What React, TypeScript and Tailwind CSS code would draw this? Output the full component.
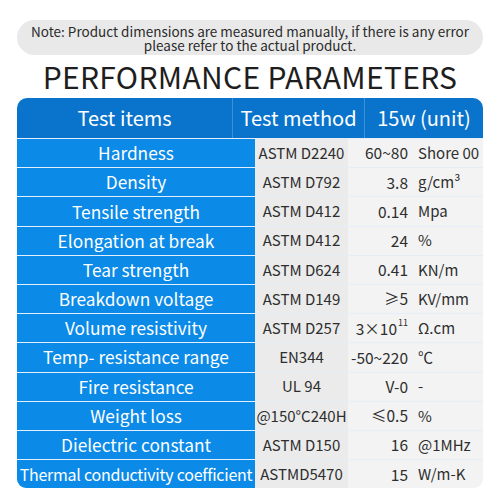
import React from 'react';

interface Param {
  item: string;
  method: string;
  value: React.ReactNode;
  unit: React.ReactNode;
}

const params: Param[] = [
  { item: 'Hardness', method: 'ASTM D2240', value: '60~80', unit: 'Shore 00' },
  { item: 'Density', method: 'ASTM D792', value: '3.8', unit: 'g/cm³' },
  { item: 'Tensile strength', method: 'ASTM D412', value: '0.14', unit: 'Mpa' },
  { item: 'Elongation at break', method: 'ASTM D412', value: '24', unit: '%' },
  { item: 'Tear strength', method: 'ASTM D624', value: '0.41', unit: 'KN/m' },
  { item: 'Breakdown voltage', method: 'ASTM D149', value: '≥5', unit: 'KV/mm' },
  {
    item: 'Volume resistivity',
    method: 'ASTM D257',
    value: (
      <span className="flex items-start">
        3×10<span className="text-[9px] leading-[9px] ml-[1px] mt-[1px]">11</span>
      </span>
    ),
    unit: 'Ω.cm',
  },
  { item: 'Temp- resistance range', method: 'EN344', value: '-50~220', unit: '℃' },
  { item: 'Fire resistance', method: 'UL 94', value: 'V-0', unit: '-' },
  { item: 'Weight loss', method: '@150°C240H', value: '≤0.5', unit: '%' },
  { item: 'Dielectric constant', method: 'ASTM D150', value: '16', unit: '@1MHz' },
  { item: 'Thermal conductivity coefficient', method: 'ASTMD5470', value: '15', unit: 'W/m-K' },
];

const font = { fontFamily: '"Noto Sans CJK SC", "Noto Sans", sans-serif' };

export default function App() {
  return (
    <div className="w-[500px] h-[500px] bg-white pt-[20px]" style={font}>
      {/* 提示 */}
      <div className="mx-[17px] h-[35px] rounded-full bg-[#e9e9e9] flex flex-col items-center justify-center text-[13.5px] leading-[14px] text-[#2b2b2b]">
        <span className="block h-[14px]">Note: Product dimensions are measured manually, if there is any error</span>
        <span className="block h-[14px]">please refer to the actual product.</span>
      </div>

      <h1 className="h-[43px] flex items-center justify-center text-[30px] text-[#1e1e1e] tracking-[0.3px]">
        PERFORMANCE PARAMETERS
      </h1>

      <div className="mx-[17px] rounded-t-[10px] rounded-b-[9px] overflow-hidden bg-white">
        {/* 表头 */}
        <div className="grid grid-cols-[216px_132px_118px] h-[40px] bg-[#0a74cc] text-white text-[20px]">
          <div className="flex items-center justify-center border-r border-[#3d8fd6]">Test items</div>
          <div className="flex items-center justify-center border-r border-[#3d8fd6]">Test method</div>
          <div className="flex items-center justify-center">15w (unit)</div>
        </div>

        {params.map((p, i) => (
          <div
            key={p.item}
            className="grid grid-cols-[238px_93px_64px_71px] h-[29.2px] border-t-[1.5px] border-[#e3eef8]"
          >
            <div
              className={
                i === params.length - 1
                  ? 'bg-[#0b8ae8] text-white text-[16px] flex items-center justify-center whitespace-nowrap tracking-[-0.25px]'
                  : 'bg-[#0b8ae8] text-white text-[17.3px] flex items-center justify-center whitespace-nowrap'
              }
            >
              {p.item}
            </div>
            <div className="bg-[#ebebeb] text-[#2e2e2e] text-[15px] flex items-center justify-center whitespace-nowrap">
              {p.method}
            </div>
            <div className="bg-[#f3f3f3] text-[#2e2e2e] text-[15.5px] flex items-center justify-end pr-[4px] whitespace-nowrap">
              {p.value}
            </div>
            <div className="bg-[#f3f3f3] text-[#2e2e2e] text-[15px] flex items-center pl-[6px] whitespace-nowrap">
              {p.unit}
            </div>
          </div>
        ))}
      </div>
    </div>
  );
}
